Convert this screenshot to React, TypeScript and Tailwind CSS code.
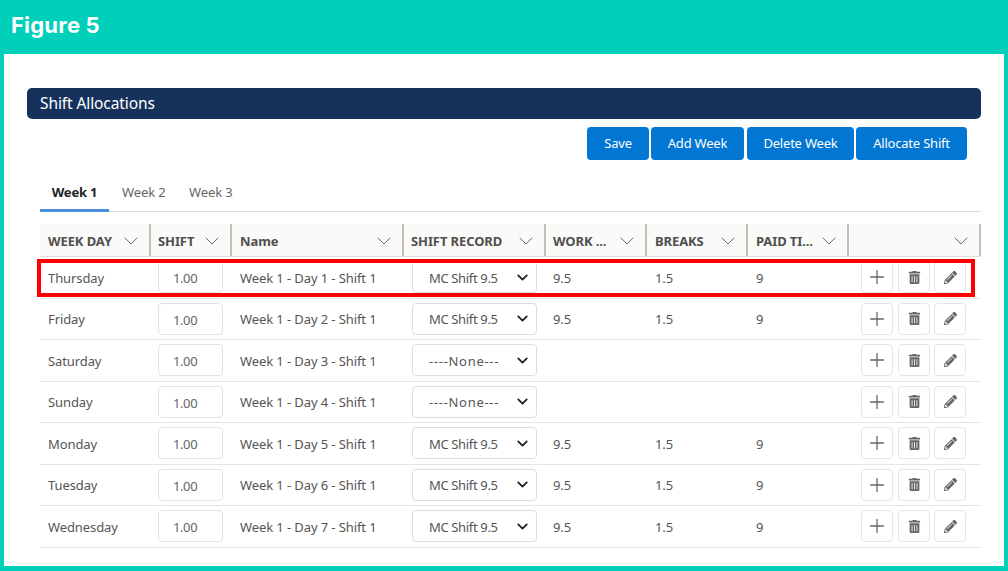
import React from "react";
import { ChevronDown, Plus } from "lucide-react";
import { FaTrashAlt, FaPencilAlt } from "react-icons/fa";

const cols = "grid grid-cols-[111px_81px_172px_142px_101px_101px_101px_132px]";
const heads: [string, string][] = [
  ["WEEK DAY", "pl-[8px]"],
  ["SHIFT", "pl-[7px]"],
  ["Name", "pl-[8px]"],
  ["SHIFT RECORD", "pl-[7px]"],
  ["WORK ...", "pl-[7px]"],
  ["BREAKS", "pl-[8px]"],
  ["PAID TI...", "pl-[8px]"],
  ["", "pl-[8px]"],
];
const rows = [
  ["Thursday", 1, true],
  ["Friday", 2, true],
  ["Saturday", 3, false],
  ["Sunday", 4, false],
  ["Monday", 5, true],
  ["Tuesday", 6, true],
  ["Wednesday", 7, true],
] as [string, number, boolean][];

function Btn({ label, w }: { label: string; w: string }) {
  return (
    <button className={`${w} h-[33px] rounded-[4px] bg-[#0176d3] text-[13px] text-white tracking-[-0.2px]`}>{label}</button>
  );
}

function IconBtn({ children }: { children: React.ReactNode }) {
  return (
    <div className="w-[32px] h-[32px] rounded-[4px] border border-[#e5e5e5] bg-white flex items-center justify-center text-[#666666]">
      {children}
    </div>
  );
}

export default function App() {
  return (
    <div className="w-[1008px] h-[571px] bg-[#00cfba] flex flex-col overflow-hidden font-['Noto_Sans',sans-serif] text-[#444444]">
      <div className="h-[54px] pl-[11px] pt-[11px] text-[22px] leading-[28px] font-bold text-white font-['Inter',sans-serif] tracking-[0.2px]">
        Figure 5
      </div>
      <div className="relative ml-[4px] mr-[4px] h-[512px] bg-white pt-[34px] pl-[23px] pr-[23px]">
        <div className="w-[954px] h-[31px] rounded-[5px] bg-[#16325c] pl-[13px] text-[15.5px] leading-[31px] text-white tracking-[-0.1px]">
          Shift Allocations
        </div>
        <div className="mt-[8px] flex justify-end gap-[2px] pr-[14px]">
          <Btn label="Save" w="w-[62px]" />
          <Btn label="Add Week" w="w-[93px] mr-[1px]" />
          <Btn label="Delete Week" w="w-[107px]" />
          <Btn label="Allocate Shift" w="w-[111px]" />
        </div>
        <div className="ml-[13px] mt-[15px] w-[941px] h-[37px] flex items-start border-b border-[#dddddd] text-[13px] leading-[34px] whitespace-nowrap">
          <div className="w-[69px] h-[37px] text-center font-bold text-[#222222] border-b-[3px] border-[#4a90e2] tracking-[-0.2px]">Week 1</div>
          <div className="ml-[13px] w-[43px] text-[#666666] tracking-[-0.1px]">Week 2</div>
          <div className="ml-[24px] w-[43px] text-[#666666] tracking-[-0.1px]">Week 3</div>
        </div>
        <div className="ml-[13px] mt-[12px] w-[941px]">
          <div className={`${cols} h-[33px] bg-[#fafaf9] border-b border-[#dddddd]`}>
            {heads.map(([h, pl], i) => (
              <div key={i} className={`${pl} pr-[6px] flex items-center justify-between border-r-2 border-[#c4c1bd] text-[13px] font-bold tracking-[-0.1px] text-[#514f4d] whitespace-nowrap`}>
                <span className="pt-[3px]">{h}</span>
                <ChevronDown size={24} strokeWidth={1} className="text-[#6b6b6b] shrink-0 mt-[2px]" />
              </div>
            ))}
          </div>
          {rows.map(([day, n, rec]) => (
            <div key={day} className={`${cols} h-[41.5px] items-center border-b border-[#e5e5e5] text-[13px] tracking-[-0.1px] text-[#555555]`}>
              <div className="pl-[8px] pt-[2px]">{day}</div>
              <div className="pl-[7px]">
                <div className="w-[65px] h-[32px] rounded-[4px] border border-[#e2e2e2] pl-[14px] leading-[32px] text-[#666666] tracking-[-0.4px]">1.00</div>
              </div>
              <div className="pl-[8px] pt-[2px] whitespace-nowrap">{`Week 1 - Day ${n} - Shift 1`}</div>
              <div className="pl-[8px]">
                <div className="w-[125px] h-[32px] rounded-[4px] border border-[#dddddd] pl-[16px] pr-[5px] flex items-center justify-between whitespace-nowrap">
                  <span className={`pt-[2px] ${rec ? "tracking-[-0.35px]" : "tracking-[0.7px]"}`}>{rec ? "MC Shift 9.5" : "----None---"}</span>
                  <ChevronDown size={17} strokeWidth={2.6} className="text-[#222222]" />
                </div>
              </div>
              <div className="pl-[7px] pt-[2px]">{rec ? "9.5" : ""}</div>
              <div className="pl-[8px] pt-[2px]">{rec ? "1.5" : ""}</div>
              <div className="pl-[8px] pt-[2px]">{rec ? "9" : ""}</div>
              <div className="pl-[12px] flex gap-[4px]">
                <div className="mr-[1px]"><IconBtn><Plus size={22} strokeWidth={1.4} /></IconBtn></div>
                <IconBtn><FaTrashAlt size={13} /></IconBtn>
                <IconBtn><FaPencilAlt size={13} /></IconBtn>
              </div>
            </div>
          ))}
        </div>
        <div className="absolute left-[33px] top-[205px] w-[938px] h-[38px] border-[4px] border-[#ff0000] pointer-events-none" />
      </div>
    </div>
  );
}
